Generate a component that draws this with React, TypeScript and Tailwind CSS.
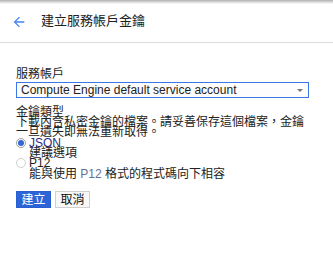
export default function App() {
  return (
    <div className="relative w-[333px] h-[257px] overflow-hidden bg-white text-[#222] font-['Liberation_Sans','Noto_Sans_CJK_TC',sans-serif]">
      <div className="pointer-events-none absolute inset-x-0 top-0 h-[4px] bg-gradient-to-b from-[#b0b0b0] to-transparent" />
      <div className="flex h-[43px] items-center border-b border-[#dcdcdc] pl-[11px]">
        <svg width="16" height="16" viewBox="0 0 24 24" className="mt-[1px]">
          <path fill="#4285f4" d="M20 11H7.83l5.59-5.59L12 4l-8 8 8 8 1.41-1.41L7.83 13H20v-2z" />
        </svg>
        <span className="ml-[14px] text-[13px] leading-[14px] text-[#212121]">建立服務帳戶金鑰</span>
      </div>
      <div className="px-[16px] pt-[24px]">
        <div className="text-[12px] leading-[14px]">服務帳戶</div>
        <div className="mt-[1px] flex h-[16px] w-[293px] items-center justify-between border border-[#3b78e7] bg-[#fdfdfd] pl-[4px] pr-[5px]">
          <span className="text-[12px] leading-[14px] text-[#222]">Compute Engine default service account</span>
          <span className="h-0 w-0 border-x-[3px] border-t-[3px] border-x-transparent border-t-[#777]" />
        </div>
        <div className="mt-[9px] text-[12px] leading-[10px]">
          <div>金鑰類型</div>
          <div>
            下載內含私密金鑰的檔案。請妥善保存這個檔案，金鑰
            <br />
            一旦遺失即無法重新取得。
          </div>
          <div className="mt-[1px] flex items-center">
            <span className="flex h-[10px] w-[10px] items-center justify-center rounded-full border border-[#9e9e9e] bg-white">
              <span className="h-[6px] w-[6px] rounded-full bg-[#3367d6]" />
            </span>
            <span className="ml-[3px] text-[#2b2b80]">JSON</span>
          </div>
          <div className="pl-[13px]">建議選項</div>
          <div className="flex items-center">
            <span className="h-[10px] w-[10px] rounded-full border border-[#cfcfcf] bg-white" />
            <span className="ml-[3px] text-[#222]">P12</span>
          </div>
          <div className="mt-[1px] pl-[13px]">
            能與使用 <span className="text-[#5f7399]">P12</span> 格式的程式碼向下相容
          </div>
        </div>
        <div className="mt-[12px] flex gap-[4px]">
          <button className="flex h-[17px] w-[35px] items-center justify-center border border-[#2a5fd0] bg-[#2d64d6] text-[12px] leading-[14px] text-white">
            建立
          </button>
          <button className="flex h-[17px] w-[35px] items-center justify-center border border-[#d0d0d0] bg-[#f8f8f8] text-[12px] leading-[14px] text-[#111]">
            取消
          </button>
        </div>
      </div>
    </div>
  );
}
